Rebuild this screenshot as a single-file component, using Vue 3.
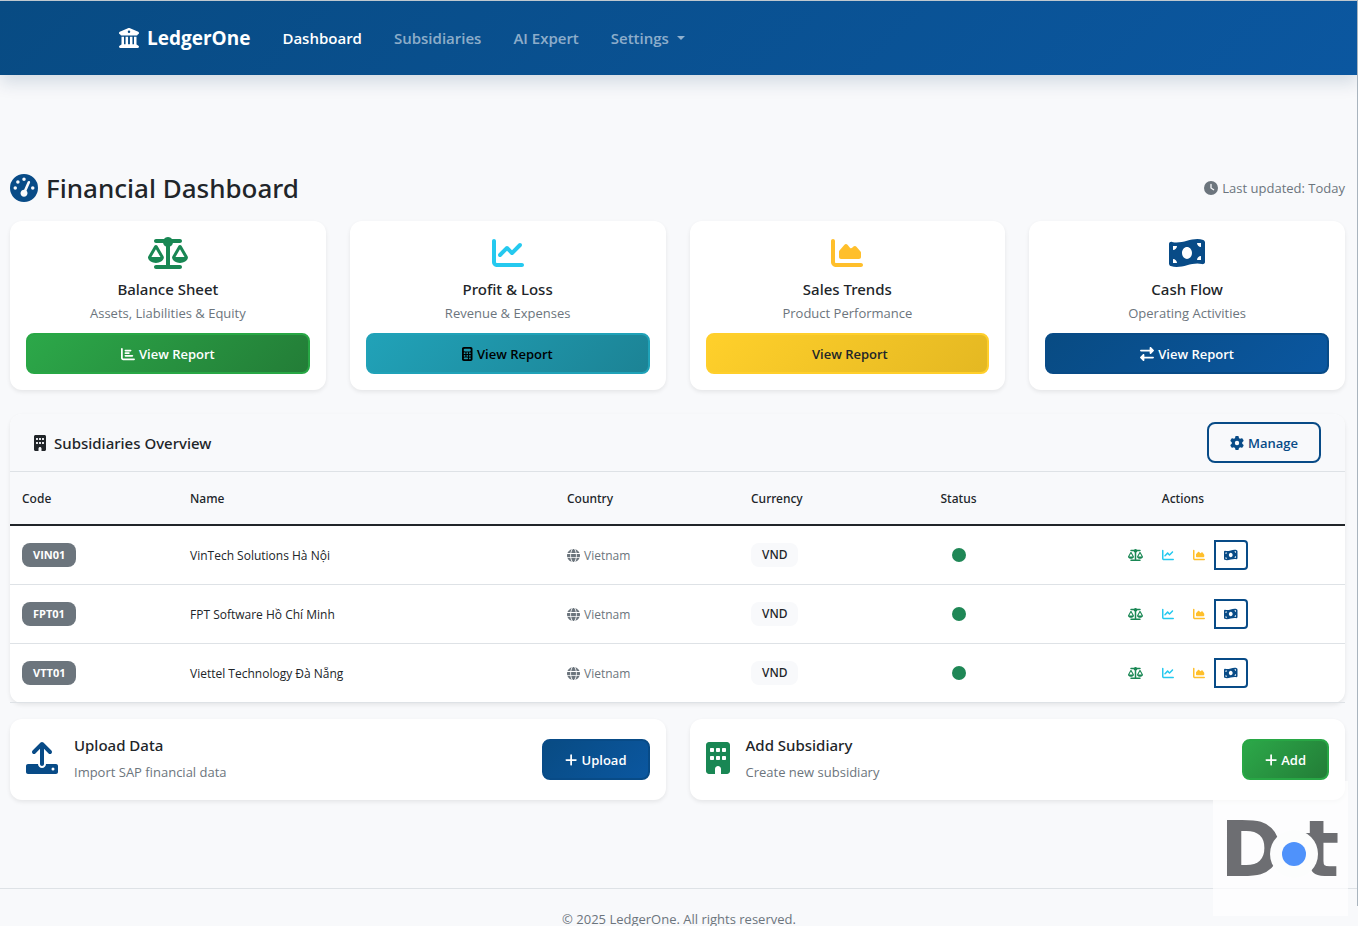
<template>
  <div class="page">
    <nav class="navbar">
      <div class="navbar-container">
        <a href="#" class="brand">
          <Icon name="bank" />
          <span>LedgerOne</span>
        </a>
        <ul class="nav-links">
          <li v-for="link in navLinks" :key="link.label">
            <a href="#" class="nav-link" :class="{ active: link.active, dropdown: link.dropdown }">{{ link.label }}</a>
          </li>
        </ul>
      </div>
    </nav>

    <main class="content">
      <header class="page-header">
        <h1 class="page-title">
          <Icon name="gauge" class="text-primary" />
          <span>Financial Dashboard</span>
        </h1>
        <p class="last-updated">
          <Icon name="clock" />
          <span>Last updated: Today</span>
        </p>
      </header>

      <section class="reports">
        <article v-for="report in reports" :key="report.title" class="card report-card">
          <Icon :name="report.icon" class="report-icon" :class="report.iconClass" />
          <h2 class="card-title">{{ report.title }}</h2>
          <p class="card-text">{{ report.text }}</p>
          <button type="button" class="btn btn-block" :class="report.btnClass">
            <Icon v-if="report.btnIcon" :name="report.btnIcon" />
            <span v-else class="icon-gap"></span>
            <span>View Report</span>
          </button>
        </article>
      </section>

      <section class="overview">
        <header class="overview-header">
          <h2 class="overview-title">
            <Icon name="building" />
            <span>Subsidiaries Overview</span>
          </h2>
          <button type="button" class="btn btn-outline">
            <Icon name="gear" />
            <span>Manage</span>
          </button>
        </header>
        <table class="table">
          <colgroup>
            <col class="col-code" />
            <col />
            <col class="col-country" />
            <col class="col-currency" />
            <col class="col-status" />
            <col class="col-actions" />
          </colgroup>
          <thead>
            <tr>
              <th scope="col">Code</th>
              <th scope="col">Name</th>
              <th scope="col">Country</th>
              <th scope="col">Currency</th>
              <th scope="col" class="text-center">Status</th>
              <th scope="col" class="text-center">Actions</th>
            </tr>
          </thead>
          <tbody>
            <tr v-for="row in subsidiaries" :key="row.code">
              <td><span class="badge badge-code">{{ row.code }}</span></td>
              <td>{{ row.name }}</td>
              <td>
                <span class="country">
                  <Icon name="globe" />
                  <span>Vietnam</span>
                </span>
              </td>
              <td><span class="badge badge-currency">VND</span></td>
              <td><span class="status-dot" role="img" aria-label="Active"></span></td>
              <td>
                <div class="actions">
                  <button type="button" class="action text-success" aria-label="Balance Sheet"><Icon name="scale" /></button>
                  <button type="button" class="action text-info" aria-label="Profit &amp; Loss"><Icon name="line" /></button>
                  <button type="button" class="action text-warning" aria-label="Sales Trends"><Icon name="area" /></button>
                  <button type="button" class="action action-outline text-primary" aria-label="Cash Flow"><Icon name="cash" /></button>
                </div>
              </td>
            </tr>
          </tbody>
        </table>
      </section>

      <section class="shortcuts">
        <article v-for="item in shortcuts" :key="item.title" class="card shortcut">
          <Icon :name="item.icon" class="shortcut-icon" :class="item.iconClass" />
          <div class="shortcut-body">
            <h2 class="shortcut-title">{{ item.title }}</h2>
            <p class="card-text">{{ item.text }}</p>
          </div>
          <button type="button" class="btn" :class="item.btnClass">
            <Icon name="plus" />
            <span>{{ item.action }}</span>
          </button>
        </article>
      </section>
    </main>

    <footer class="footer">© 2025 LedgerOne. All rights reserved.</footer>

    <div class="dot-logo">
      <svg viewBox="0 0 135 135" width="135" height="135">
        <text x="7" y="95" font-size="76">D</text>
        <text x="89" y="95" font-size="78">t</text>
        <circle cx="81" cy="73" r="24" fill="#fcfdfd" />
        <ellipse cx="81" cy="73" rx="12" ry="12" fill="#4f92fb" />
      </svg>
    </div>
    <div class="edge"></div>
  </div>
</template>

<script setup>
import { h } from 'vue'

const icons = {
  bank: { w: 512, d: 'M243.4 2.6l-224 96c-14 6-21.8 21-18.7 35.8S16.8 160 32 160v8c0 13.3 10.7 24 24 24H456c13.3 0 24-10.7 24-24v-8c15.2 0 28.3-10.7 31.3-25.6s-4.8-29.9-18.7-35.8l-224-96c-8-3.4-17.2-3.4-25.2 0zM128 224H64V420.3c-.6 .3-1.2 .7-1.8 1.1l-48 32c-11.7 7.8-17 22.4-12.9 35.9S17.9 512 32 512H480c14.1 0 26.5-9.2 30.6-22.7s-1.1-28.1-12.9-35.9l-48-32c-.6-.4-1.2-.7-1.8-1.1V224H384V416H344V224H280V416H232V224H168V416H128V224zM256 64a32 32 0 1 1 0 64 32 32 0 1 1 0-64z' },
  gauge: { w: 512, d: 'M0 256a256 256 0 1 1 512 0A256 256 0 1 1 0 256zM288 96a32 32 0 1 0 -64 0 32 32 0 1 0 64 0zM256 416c35.3 0 64-28.7 64-64c0-17.4-6.9-33.1-18.1-44.6L366 161.7c5.3-12.1-.2-26.3-12.3-31.6s-26.3 .2-31.6 12.3L257.9 288c-.6 0-1.3 0-1.9 0c-35.3 0-64 28.7-64 64s28.7 64 64 64zM176 144a32 32 0 1 0 -64 0 32 32 0 1 0 64 0zM96 288a32 32 0 1 0 0-64 32 32 0 1 0 0 64zm352-32a32 32 0 1 0 -64 0 32 32 0 1 0 64 0z' },
  clock: { w: 512, d: 'M256 0a256 256 0 1 1 0 512A256 256 0 1 1 256 0zM232 120V256c0 8 4 15.5 10.7 20l96 64c11 7.4 25.9 4.4 33.3-6.7s4.4-25.9-6.7-33.3L280 243.2V120c0-13.3-10.7-24-24-24s-24 10.7-24 24z' },
  scale: { w: 640, d: 'M384 32H512c17.7 0 32 14.3 32 32s-14.3 32-32 32H398.4c-5.2 25.8-22.9 47.1-46.4 57.3V448H512c17.7 0 32 14.3 32 32s-14.3 32-32 32H320 128c-17.7 0-32-14.3-32-32s14.3-32 32-32H288V153.3c-23.5-10.3-41.2-31.6-46.4-57.3H128c-17.7 0-32-14.3-32-32s14.3-32 32-32H256c14.6-19.4 37.8-32 64-32s49.4 12.6 64 32zm55.6 288H584.4L512 195.8 439.6 320zM512 416c-62.9 0-115.2-34-126-78.9c-2.6-11 1-22.3 6.7-32.1l95.2-163.2c5-8.6 14.2-13.8 24.1-13.8s19.1 5.3 24.1 13.8l95.2 163.2c5.7 9.8 9.3 21.1 6.7 32.1C627.2 382 574.9 416 512 416zM126.8 195.8L54.4 320H199.3L126.8 195.8zM.9 337.1c-2.6-11 1-22.3 6.7-32.1l95.2-163.2c5-8.6 14.2-13.8 24.1-13.8s19.1 5.3 24.1 13.8l95.2 163.2c5.7 9.8 9.3 21.1 6.7 32.1C242 382 189.7 416 126.8 416S11.7 382 .9 337.1z' },
  line: { w: 512, d: 'M64 64c0-17.7-14.3-32-32-32S0 46.3 0 64V400c0 44.2 35.8 80 80 80H480c17.7 0 32-14.3 32-32s-14.3-32-32-32H80c-8.8 0-16-7.2-16-16V64zm406.6 86.6c12.5-12.5 12.5-32.8 0-45.3s-32.8-12.5-45.3 0L320 210.7l-57.4-57.4c-12.5-12.5-32.8-12.5-45.3 0l-112 112c-12.5 12.5-12.5 32.8 0 45.3s32.8 12.5 45.3 0L240 221.3l57.4 57.4c12.5 12.5 32.8 12.5 45.3 0l128-128z' },
  area: { w: 512, d: 'M64 64c0-17.7-14.3-32-32-32S0 46.3 0 64V400c0 44.2 35.8 80 80 80H480c17.7 0 32-14.3 32-32s-14.3-32-32-32H80c-8.8 0-16-7.2-16-16V64zm96 288H448c17.7 0 32-14.3 32-32V251.8c0-7.6-2.7-15-7.7-20.8l-65.8-76.8c-12.1-14.2-33.7-15-46.9-1.8l-21 21c-10 10-26.4 9.2-35.4-1.6l-39.2-47c-12.6-15.1-35.7-15.4-48.7-.6L135.9 215c-5.1 5.8-7.9 13.3-7.9 21.1v84c0 17.7 14.3 32 32 32z' },
  cash: { w: 576, d: 'M0 112.5V422.3c0 18 10.1 35 27 41.3c87 32.5 174 10.3 261-11.9c79.8-20.3 159.6-40.7 239.3-18.9c23 6.3 48.7-9.5 48.7-33.4V89.7c0-18-10.1-35-27-41.3C462 15.9 375 38.1 288 60.3C208.2 80.6 128.4 100.9 48.7 79.1C25.6 72.8 0 88.6 0 112.5zM288 352c-44.2 0-80-43-80-96s35.8-96 80-96s80 43 80 96s-35.8 96-80 96zM64 352c35.3 0 64 28.7 64 64H64V352zm64-208c0 35.3-28.7 64-64 64V144h64zM512 304v64H448c0-35.3 28.7-64 64-64zM448 96h64v64c-35.3 0-64-28.7-64-64z' },
  bars: { w: 512, d: 'M32 32c17.7 0 32 14.3 32 32V400c0 8.8 7.2 16 16 16H480c17.7 0 32 14.3 32 32s-14.3 32-32 32H80c-44.2 0-80-35.8-80-80V64C0 46.3 14.3 32 32 32zm96 96c0-17.7 14.3-32 32-32l192 0c17.7 0 32 14.3 32 32s-14.3 32-32 32H160c-17.7 0-32-14.3-32-32zm32 64H288c17.7 0 32 14.3 32 32s-14.3 32-32 32H160c-17.7 0-32-14.3-32-32s14.3-32 32-32zm0 96H416c17.7 0 32 14.3 32 32s-14.3 32-32 32H160c-17.7 0-32-14.3-32-32s14.3-32 32-32z' },
  calculator: { w: 384, d: 'M64 0C28.7 0 0 28.7 0 64V448c0 35.3 28.7 64 64 64H320c35.3 0 64-28.7 64-64V64c0-35.3-28.7-64-64-64H64zM96 64H288c17.7 0 32 14.3 32 32v32c0 17.7-14.3 32-32 32H96c-17.7 0-32-14.3-32-32V96c0-17.7 14.3-32 32-32zm32 160a32 32 0 1 1 -64 0 32 32 0 1 1 64 0zM96 352a32 32 0 1 1 0-64 32 32 0 1 1 0 64zM64 416c0-17.7 14.3-32 32-32h96c17.7 0 32 14.3 32 32s-14.3 32-32 32H96c-17.7 0-32-14.3-32-32zM192 256a32 32 0 1 1 0-64 32 32 0 1 1 0 64zm32 64a32 32 0 1 1 -64 0 32 32 0 1 1 64 0zm64-64a32 32 0 1 1 0-64 32 32 0 1 1 0 64zm32 64a32 32 0 1 1 -64 0 32 32 0 1 1 64 0zM288 448a32 32 0 1 1 0-64 32 32 0 1 1 0 64z' },
  exchange: { w: 512, d: 'M32 96l320 0V32c0-12.9 7.8-24.6 19.8-29.6s25.7-2.2 34.9 6.9l96 96c6 6 9.4 14.1 9.4 22.6s-3.4 16.6-9.4 22.6l-96 96c-9.2 9.2-22.9 11.9-34.9 6.9s-19.8-16.6-19.8-29.6V160L32 160c-17.7 0-32-14.3-32-32s14.3-32 32-32zM480 352c17.7 0 32 14.3 32 32s-14.3 32-32 32H160v64c0 12.9-7.8 24.6-19.8 29.6s-25.7 2.2-34.9-6.9l-96-96c-6-6-9.4-14.1-9.4-22.6s3.4-16.6 9.4-22.6l96-96c9.2-9.2 22.9-11.9 34.9-6.9s19.8 16.6 19.8 29.6l0 64H480z' },
  building: { w: 384, d: 'M48 0C21.5 0 0 21.5 0 48V464c0 26.5 21.5 48 48 48h96V432c0-26.5 21.5-48 48-48s48 21.5 48 48v80h96c26.5 0 48-21.5 48-48V48c0-26.5-21.5-48-48-48H48zM64 240c0-8.8 7.2-16 16-16h32c8.8 0 16 7.2 16 16v32c0 8.8-7.2 16-16 16H80c-8.8 0-16-7.2-16-16V240zm112-16h32c8.8 0 16 7.2 16 16v32c0 8.8-7.2 16-16 16H176c-8.8 0-16-7.2-16-16V240c0-8.8 7.2-16 16-16zm80 16c0-8.8 7.2-16 16-16h32c8.8 0 16 7.2 16 16v32c0 8.8-7.2 16-16 16H272c-8.8 0-16-7.2-16-16V240zM80 96h32c8.8 0 16 7.2 16 16v32c0 8.8-7.2 16-16 16H80c-8.8 0-16-7.2-16-16V112c0-8.8 7.2-16 16-16zm80 16c0-8.8 7.2-16 16-16h32c8.8 0 16 7.2 16 16v32c0 8.8-7.2 16-16 16H176c-8.8 0-16-7.2-16-16V112zM272 96h32c8.8 0 16 7.2 16 16v32c0 8.8-7.2 16-16 16H272c-8.8 0-16-7.2-16-16V112c0-8.8 7.2-16 16-16z' },
  gear: { w: 512, d: 'M495.9 166.6c3.2 8.7 .5 18.4-6.4 24.6l-43.3 39.4c1.1 8.3 1.7 16.8 1.7 25.4s-.6 17.1-1.7 25.4l43.3 39.4c6.9 6.2 9.6 15.9 6.4 24.6c-4.4 11.9-9.7 23.3-15.8 34.3l-4.7 8.1c-6.6 11-14 21.4-22.1 31.2c-5.9 7.2-15.7 9.6-24.5 6.8l-55.7-17.7c-13.4 10.3-28.2 18.9-44 25.4l-12.5 57.1c-2 9.1-9 16.3-18.2 17.8c-13.8 2.3-28 3.5-42.5 3.5s-28.7-1.2-42.5-3.5c-9.2-1.5-16.2-8.7-18.2-17.8l-12.5-57.1c-15.8-6.5-30.6-15.1-44-25.4L83.1 425.9c-8.8 2.8-18.6 .3-24.5-6.8c-8.1-9.8-15.5-20.2-22.1-31.2l-4.7-8.1c-6.1-11-11.4-22.4-15.8-34.3c-3.2-8.7-.5-18.4 6.4-24.6l43.3-39.4C64.6 273.1 64 264.6 64 256s.6-17.1 1.7-25.4L22.4 191.2c-6.9-6.2-9.6-15.9-6.4-24.6c4.4-11.9 9.7-23.3 15.8-34.3l4.7-8.1c6.6-11 14-21.4 22.1-31.2c5.9-7.2 15.7-9.6 24.5-6.8l55.7 17.7c13.4-10.3 28.2-18.9 44-25.4l12.5-57.1c2-9.1 9-16.3 18.2-17.8C227.3 1.2 241.5 0 256 0s28.7 1.2 42.5 3.5c9.2 1.5 16.2 8.7 18.2 17.8l12.5 57.1c15.8 6.5 30.6 15.1 44 25.4l55.7-17.7c8.8-2.8 18.6-.3 24.5 6.8c8.1 9.8 15.5 20.2 22.1 31.2l4.7 8.1c6.1 11 11.4 22.4 15.8 34.3zM256 336a80 80 0 1 0 0-160 80 80 0 1 0 0 160z' },
  globe: { w: 512, d: 'M352 256c0 22.2-1.2 43.6-3.3 64H163.3c-2.2-20.4-3.3-41.8-3.3-64s1.2-43.6 3.3-64H348.7c2.2 20.4 3.3 41.8 3.3 64zm28.8-64H503.9c5.3 20.5 8.1 41.9 8.1 64s-2.8 43.5-8.1 64H380.8c2.1-20.6 3.2-42 3.2-64s-1.1-43.4-3.2-64zm112.6-32H376.7c-10-63.9-29.8-117.4-55.3-151.6c78.3 20.7 142 77.5 171.9 151.6zm-149.1 0H167.7c6.1-36.4 15.5-68.6 27-94.7c10.5-23.6 22.2-40.7 33.5-51.5C239.4 3.2 248.7 0 256 0s16.6 3.2 27.8 13.8c11.3 10.8 23 27.9 33.5 51.5c11.6 26 20.9 58.2 27 94.7zm-209 0H18.6C48.6 85.9 112.2 29.1 190.6 8.4C165.1 42.6 145.3 96.1 135.3 160zM8.1 192H131.2c-2.1 20.6-3.2 42-3.2 64s1.1 43.4 3.2 64H8.1C2.8 299.5 0 278.1 0 256s2.8-43.5 8.1-64zM194.7 446.6c-11.6-26-20.9-58.2-27-94.6H344.3c-6.1 36.4-15.5 68.6-27 94.6c-10.5 23.6-22.2 40.7-33.5 51.5C272.6 508.8 263.3 512 256 512s-16.6-3.2-27.8-13.8c-11.3-10.8-23-27.9-33.5-51.5zM135.3 352c10 63.9 29.8 117.4 55.3 151.6C112.2 482.9 48.6 426.1 18.6 352H135.3zm358.1 0c-30 74.1-93.6 130.9-171.9 151.6c25.5-34.2 45.2-87.7 55.3-151.6H493.4z' },
  upload: { w: 512, d: 'M288 109.3V352c0 17.7-14.3 32-32 32s-32-14.3-32-32V109.3l-73.4 73.4c-12.5 12.5-32.8 12.5-45.3 0s-12.5-32.8 0-45.3l128-128c12.5-12.5 32.8-12.5 45.3 0l128 128c12.5 12.5 12.5 32.8 0 45.3s-32.8 12.5-45.3 0L288 109.3zM32 352H192c0 35.3 28.7 64 64 64s64-28.7 64-64H480c17.7 0 32 14.3 32 32v96c0 17.7-14.3 32-32 32H32c-17.7 0-32-14.3-32-32V384c0-17.7 14.3-32 32-32zM432 456a24 24 0 1 0 0-48 24 24 0 1 0 0 48z' },
  plus: { w: 448, d: 'M256 80c0-17.7-14.3-32-32-32s-32 14.3-32 32V224H48c-17.7 0-32 14.3-32 32s14.3 32 32 32H192V432c0 17.7 14.3 32 32 32s32-14.3 32-32V288H400c17.7 0 32-14.3 32-32s-14.3-32-32-32H256V80z' }
}

const Icon = (props) => {
  const { w, d } = icons[props.name]
  return h(
    'svg',
    { viewBox: `0 0 ${w} 512`, width: `${w / 512}em`, height: '1em', fill: 'currentColor', 'aria-hidden': 'true' },
    [h('path', { d })]
  )
}
Icon.props = ['name']

const navLinks = [
  { label: 'Dashboard', active: true },
  { label: 'Subsidiaries' },
  { label: 'AI Expert' },
  { label: 'Settings', dropdown: true }
]

const reports = [
  { title: 'Balance Sheet', text: 'Assets, Liabilities & Equity', icon: 'scale', iconClass: 'text-success', btnClass: 'btn-success', btnIcon: 'bars' },
  { title: 'Profit & Loss', text: 'Revenue & Expenses', icon: 'line', iconClass: 'text-info', btnClass: 'btn-info', btnIcon: 'calculator' },
  { title: 'Sales Trends', text: 'Product Performance', icon: 'area', iconClass: 'text-warning', btnClass: 'btn-warning' },
  { title: 'Cash Flow', text: 'Operating Activities', icon: 'cash', iconClass: 'text-primary', btnClass: 'btn-primary', btnIcon: 'exchange' }
]

const subsidiaries = [
  { code: 'VIN01', name: 'VinTech Solutions Hà Nội' },
  { code: 'FPT01', name: 'FPT Software Hồ Chí Minh' },
  { code: 'VTT01', name: 'Viettel Technology Đà Nẵng' }
]

const shortcuts = [
  { title: 'Upload Data', text: 'Import SAP financial data', icon: 'upload', iconClass: 'text-primary', action: 'Upload', btnClass: 'btn-primary' },
  { title: 'Add Subsidiary', text: 'Create new subsidiary', icon: 'building', iconClass: 'text-success', action: 'Add', btnClass: 'btn-success' }
]
</script>

<style>
body {
  margin: 0;
  background: #f8f9fb;
}
</style>

<style scoped>
.page {
  box-sizing: border-box;
  min-height: 100vh;
  border-top: 1px solid #c3cbd2;
  background: #f8f9fb;
  color: #212529;
  font-family: 'Segoe UI', 'Open Sans', 'Noto Sans', sans-serif;
  font-size: 13px;
}

h1,
h2,
p,
ul {
  margin: 0;
  padding: 0;
}

h1,
h2 {
  font-family: 'Segoe UI', 'Noto Sans', 'Open Sans', sans-serif;
  font-weight: 500;
}

svg {
  flex: none;
}

.text-primary {
  color: #084b87;
}

.text-success {
  color: #198754;
}

.text-info {
  color: #25c9ef;
}

.text-warning {
  color: #ffbf2b;
}

.text-center {
  text-align: center;
}

/* Navbar */
.navbar {
  height: 74px;
  background: linear-gradient(135deg, #084b83 0%, #0b57a0 100%);
  box-shadow: 0 8px 16px rgba(8, 50, 90, 0.14);
}

.navbar-container {
  display: flex;
  align-items: center;
  box-sizing: border-box;
  max-width: 1140px;
  height: 100%;
  margin: 0 auto;
  padding: 0 10px;
}

.brand {
  display: flex;
  align-items: center;
  gap: 8px;
  margin-right: 32px;
  color: #ffffff;
  font-size: 19px;
  font-weight: 700;
  text-decoration: none;
}

.brand svg {
  font-size: 20px;
}

.nav-links {
  display: flex;
  gap: 32px;
  list-style: none;
}

.nav-link {
  display: flex;
  align-items: center;
  color: rgba(255, 255, 255, 0.55);
  font-size: 15px;
  font-weight: 600;
  text-decoration: none;
}

.nav-link.active {
  color: #ffffff;
}

.nav-link.dropdown::after {
  content: '';
  margin-left: 8px;
  border-top: 4px solid;
  border-right: 4px solid transparent;
  border-left: 4px solid transparent;
}

/* Page heading */
.content {
  padding: 96px 13px 88px 10px;
}

.page-header {
  display: flex;
  align-items: center;
  justify-content: space-between;
  height: 34px;
  margin-bottom: 16px;
}

.page-title {
  display: flex;
  align-items: center;
  gap: 8px;
  font-size: 26px;
}

.page-title svg {
  font-size: 28px;
}

.last-updated {
  display: flex;
  align-items: center;
  gap: 4px;
  color: #6c757d;
}

.last-updated svg {
  font-size: 14px;
}

/* Cards */
.card {
  padding: 16px;
  border-radius: 12px;
  background: #ffffff;
  box-shadow: 0 2px 4px rgba(0, 0, 0, 0.08);
}

.reports {
  display: grid;
  grid-template-columns: repeat(4, 1fr);
  gap: 24px;
  margin-bottom: 24px;
}

.report-card {
  display: flex;
  flex-direction: column;
  align-items: center;
}

.report-icon {
  margin-bottom: 8px;
  font-size: 32px;
}

.card-title {
  font-size: 15px;
  line-height: 24px;
}

.card-text {
  color: #6c757d;
  font-size: 13px;
  line-height: 24px;
}

/* Buttons */
.btn {
  display: flex;
  align-items: center;
  justify-content: center;
  gap: 4px;
  box-sizing: border-box;
  height: 41px;
  padding: 0 21px;
  border: 2px solid;
  border-radius: 8px;
  font-family: inherit;
  font-size: 13px;
  font-weight: 600;
  cursor: pointer;
}

.btn svg {
  font-size: 14px;
}

.btn-block {
  width: 100%;
  margin-top: 8px;
}

.icon-gap {
  width: 1px;
}

.btn-primary {
  border-color: #084b87;
  background: linear-gradient(135deg, #084b83 0%, #0b57a0 100%);
  color: #ffffff;
}

.btn-success {
  border-color: #28a745;
  background: linear-gradient(135deg, #2ca849 0%, #237d37 100%);
  color: #ffffff;
}

.btn-info {
  border-color: #20a2b8;
  background: linear-gradient(135deg, #21a2b8 0%, #1c8395 100%);
  color: #000000;
}

.btn-warning {
  border-color: #ffcf2b;
  background: linear-gradient(135deg, #ffd02b 0%, #e4b822 100%);
  color: #212529;
}

.btn-outline {
  border-color: #084b87;
  background: transparent;
  color: #084b87;
}

/* Subsidiaries table */
.overview {
  margin-bottom: 16px;
  border-radius: 12px;
  background: #ffffff;
  box-shadow: 0 2px 4px rgba(0, 0, 0, 0.08);
}

.overview-header {
  display: flex;
  align-items: center;
  justify-content: space-between;
  padding: 8px 24px;
  border-bottom: 1px solid #dee2e6;
  border-radius: 12px 12px 0 0;
  background: #f8f9fb;
}

.overview-title {
  display: flex;
  align-items: center;
  gap: 8px;
  font-size: 15px;
}

.overview-title svg {
  font-size: 16px;
}

.table {
  width: 100%;
  border-spacing: 0;
  table-layout: fixed;
}

.col-code {
  width: 168px;
}

.col-country {
  width: 184px;
}

.col-currency {
  width: 157px;
}

.col-status {
  width: 125px;
}

.col-actions {
  width: 324px;
}

th,
td {
  box-sizing: border-box;
  padding: 0 12px;
}

th {
  height: 54px;
  border-bottom: 2px solid #212529;
  background: #f8f9fb;
  font-family: 'Segoe UI', 'Noto Sans', 'Open Sans', sans-serif;
  font-size: 12px;
  font-weight: 500;
  text-align: left;
}

th.text-center {
  text-align: center;
}

td {
  height: 59px;
  border-bottom: 1px solid #dee2e6;
  font-size: 12px;
}

.badge {
  display: inline-block;
  padding: 0 11px;
  border-radius: 8px;
  line-height: 24px;
}

.badge-code {
  background: #6c757d;
  color: #ffffff;
  font-size: 11px;
  font-weight: 700;
}

.badge-currency {
  background: #f8f9fb;
  font-family: 'Segoe UI', 'Noto Sans', 'Open Sans', sans-serif;
  font-size: 12px;
  font-weight: 500;
}

.country {
  display: flex;
  align-items: center;
  gap: 4px;
  color: #6c757d;
}

.country svg {
  font-size: 13px;
}

.status-dot {
  display: block;
  width: 14px;
  height: 14px;
  margin: 0 auto;
  border-radius: 50%;
  background: #1f8756;
}

.actions {
  display: flex;
  justify-content: center;
}

.action {
  display: flex;
  align-items: center;
  box-sizing: border-box;
  height: 30px;
  padding: 0 8px;
  border: 2px solid transparent;
  background: transparent;
  font-size: 12px;
  cursor: pointer;
}

.action + .action {
  margin-left: -1px;
}

.action-outline {
  border-color: currentColor;
  border-radius: 0 4px 4px 0;
}

/* Shortcuts */
.shortcuts {
  display: grid;
  grid-template-columns: 1fr 1fr;
  gap: 24px;
}

.shortcut {
  display: flex;
  align-items: center;
  gap: 16px;
}

.shortcut-icon {
  margin-bottom: 4px;
  font-size: 32px;
}

.shortcut-body {
  flex: 1;
}

.shortcut-title {
  margin-bottom: 4px;
  font-size: 15px;
  line-height: 21px;
}

.footer {
  padding: 20px 0;
  border-top: 1px solid #dee2e6;
  color: #6c757d;
  font-size: 13px;
  line-height: 20px;
  text-align: center;
}

/* Floating badge in the corner */
.dot-logo {
  position: fixed;
  right: 10px;
  bottom: 10px;
  width: 135px;
  height: 135px;
  background: rgba(255, 255, 255, 0.7);
}

.dot-logo svg {
  display: block;
}

.dot-logo text {
  fill: #6d6e72;
  font-family: 'DejaVu Sans', sans-serif;
  font-weight: 700;
}

.edge {
  position: fixed;
  top: 0;
  right: 0;
  bottom: 20px;
  width: 1px;
  background: #a9b4be;
}
</style>
